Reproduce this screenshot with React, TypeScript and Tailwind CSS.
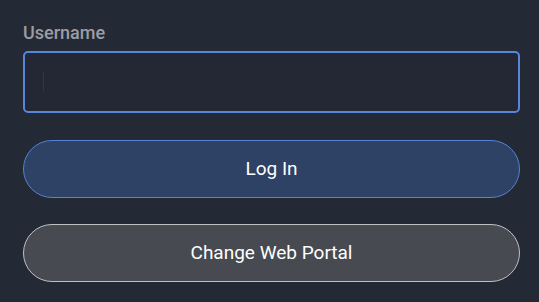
export default function App() {
  return (
    <div className="min-h-[302px] w-full bg-[#242a35] pl-[23px] pr-[19px] pt-[22px] font-['Roboto',sans-serif]">
      <label className="block text-[18px] font-medium leading-[21px] text-[#9b9da3]">
        Username
      </label>

      <div className="mt-[8px] flex h-[62px] w-full items-center rounded-[5px] border-2 border-solid border-[#5886dc] bg-[#232834] px-[18px]">
        <span className="h-[20px] w-px bg-[#2f3644]" aria-hidden="true" />
      </div>

      <button className="mt-[27px] flex h-[58px] w-full items-center justify-center rounded-full border-[1.5px] border-solid border-[#5582d2] bg-[#2e4265] pt-px text-[19px] text-white">
        Log In
      </button>

      <button className="mt-[26px] flex h-[58px] w-full items-center justify-center rounded-full border-[1.5px] border-solid border-[#c0c0c0] bg-[#474a51] pt-px text-[19px] text-white">
        Change Web Portal
      </button>
    </div>
  );
}
